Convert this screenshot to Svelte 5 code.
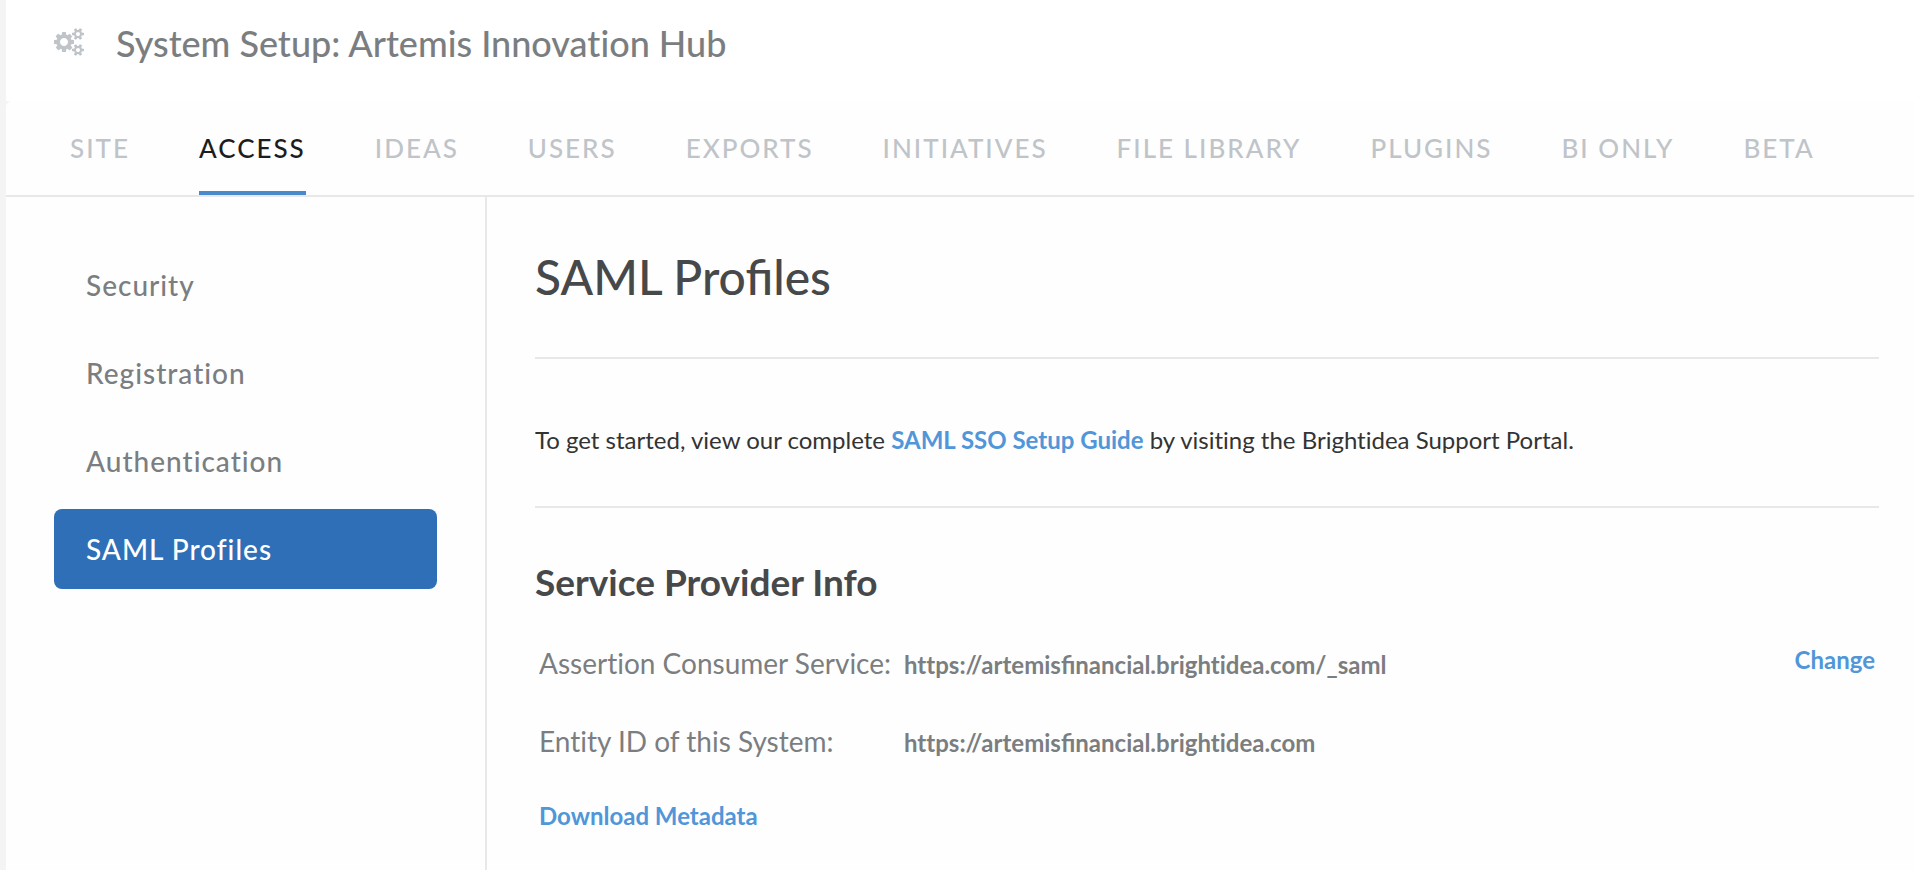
<script>
  const tabs = ['Site', 'Access', 'Ideas', 'Users', 'Exports', 'Initiatives', 'File Library', 'Plugins', 'BI Only', 'Beta'];
  const sections = ['Security', 'Registration', 'Authentication', 'SAML Profiles'];
  let activeTab = $state('Access');
  let activeSection = $state('SAML Profiles');
</script>

<div class="page">
  <header class="title-bar">
    <svg class="cogs" viewBox="0 0 1920 1792" aria-hidden="true">
      <path d="M896 896q0-106-75-181t-181-75-181 75-75 181 75 181 181 75 181-75 75-181zm768 512q0-52-38-90t-90-38-90 38-38 90q0 53 37.5 90.5t90.5 37.5 90.5-37.5 37.5-90.5zm0-1024q0-52-38-90t-90-38-90 38-38 90q0 53 37.5 90.5t90.5 37.5 90.5-37.5 37.5-90.5zm-384 421v185q0 10-7 19.5t-16 10.5l-155 24q-11 35-32 76 34 48 90 115 7 11 7 20 0 12-7 19-23 30-82.5 89.5t-78.5 59.5q-11 0-21-7l-115-90q-37 19-77 31-11 108-23 155-7 24-30 24h-186q-11 0-20-7.5t-10-17.5l-23-153q-34-10-75-31l-118 89q-7 7-20 7-11 0-21-8-144-133-144-160 0-9 7-19 10-14 41-53t47-61q-23-44-35-82l-152-24q-10-1-17-9.5t-7-19.5v-185q0-10 7-19.5t16-10.5l155-24q11-35 32-76-34-48-90-115-7-11-7-20 0-12 7-20 22-30 82-89t79-59q11 0 21 7l115 90q34-18 77-32 11-108 23-154 7-24 30-24h186q11 0 20 7.5t10 17.5l23 153q34 10 75 31l118-89q8-7 20-7 11 0 21 8 144 133 144 160 0 8-7 19-12 16-42 54t-45 60q23 48 34 82l152 23q10 2 17 10.5t7 19.5zm640 533v140q0 16-149 31-12 27-30 52 51 113 51 138 0 4-4 7-122 71-124 71-8 0-46-47t-52-68q-20 2-30 2t-30-2q-14 21-52 68t-46 47q-2 0-124-71-4-3-4-7 0-25 51-138-18-25-30-52-149-15-149-31v-140q0-16 149-31 13-29 30-52-51-113-51-138 0-4 4-7 4-2 35-20t59-34 30-16q8 0 46 46.5t52 67.5q20-2 30-2t30 2q51-71 92-112l6-2q4 0 124 70 4 3 4 7 0 25-51 138 17 23 30 52 149 15 149 31zm0-1024v140q0 16-149 31-12 27-30 52 51 113 51 138 0 4-4 7-122 71-124 71-8 0-46-47t-52-68q-20 2-30 2t-30-2q-14 21-52 68t-46 47q-2 0-124-71-4-3-4-7 0-25 51-138-18-25-30-52-149-15-149-31v-140q0-16 149-31 13-29 30-52-51-113-51-138 0-4 4-7 4-2 35-20t59-34 30-16q8 0 46 46.5t52 67.5q20-2 30-2t30 2q51-71 92-112l6-2q4 0 124 70 4 3 4 7 0 25-51 138 17 23 30 52 149 15 149 31z" />
    </svg>
    <h1>System Setup: Artemis Innovation Hub</h1>
  </header>

  <div class="panel">
    <nav class="tabs">
      {#each tabs as tab}
        <button class="tab" class:active={tab === activeTab} onclick={() => (activeTab = tab)}>{tab}</button>
      {/each}
    </nav>

    <div class="body">
      <nav class="sidebar">
        {#each sections as section}
          <button class="section" class:active={section === activeSection} onclick={() => (activeSection = section)}>{section}</button>
        {/each}
      </nav>

      <main>
        <h2>SAML Profiles</h2>
        <p class="intro">
          To get started, view our complete <a href="#guide">SAML SSO Setup Guide</a> by visiting the Brightidea Support Portal.
        </p>
        <h3>Service Provider Info</h3>
        <table>
          <tbody>
            <tr>
              <th scope="row">Assertion Consumer Service:</th>
              <td>https://artemis<span class="joined">fi</span>nancial.brightidea.com/_saml</td>
              <td class="action change"><a href="#change">Change</a></td>
            </tr>
            <tr>
              <th scope="row">Entity ID of this System:</th>
              <td>https://artemis<span class="joined">fi</span>nancial.brightidea.com</td>
              <td></td>
            </tr>
            <tr>
              <td class="action" colspan="3"><a href="#metadata">Download Metadata</a></td>
            </tr>
          </tbody>
        </table>
      </main>
    </div>
  </div>
</div>

<style>
  :global(body) {
    background: #f4f4f4;
  }
  .page {
    display: flex;
    flex-direction: column;
    box-sizing: border-box;
    min-height: 100vh;
    padding-left: 6px;
    font-family: Lato, sans-serif;
    font-variant-ligatures: none;
    color: #7b7e81;
  }
  .title-bar {
    display: flex;
    align-items: flex-start;
    gap: 32px;
    padding: 21px 48px 36px;
    background: #fff;
  }
  .cogs {
    width: 30px;
    height: 28px;
    margin-top: 7px;
    fill: #bfc4c9;
  }
  h1, h2, h3, p {
    margin: 0;
  }
  h1 {
    font-size: 36px;
    line-height: 44px;
    font-weight: 500;
  }
  .panel {
    flex: 1;
    display: flex;
    flex-direction: column;
    background: #fefefe;
    border-top-left-radius: 6px;
  }
  .tabs {
    display: flex;
    gap: 69px;
    padding: 0 64px;
    border-bottom: 2px solid #e8e8e8;
  }
  button {
    margin: 0;
    padding: 0;
    border: 0;
    background: none;
    font-family: inherit;
    color: inherit;
    cursor: pointer;
    white-space: nowrap;
  }
  .tab {
    padding: 24px 0 20px;
    border-bottom: 4px solid transparent;
    font-size: 26px;
    line-height: 46px;
    font-weight: 500;
    letter-spacing: 2px;
    text-transform: uppercase;
    color: #bfc4c9;
  }
  .tab.active {
    color: #1d1d1d;
    border-color: #4a89cc;
  }
  .body {
    flex: 1;
    display: flex;
  }
  .sidebar {
    display: flex;
    flex-direction: column;
    gap: 8px;
    flex: 0 0 383px;
    padding: 48px;
    border-right: 2px solid #e8e8e8;
  }
  .section {
    padding: 0 32px;
    border-radius: 8px;
    font-size: 28px;
    line-height: 80px;
    font-weight: 500;
    letter-spacing: 1px;
    text-align: left;
  }
  .section.active {
    background: #2f6fb7;
    color: #fff;
  }
  main {
    flex: 1;
    padding: 48px 35px 0 48px;
  }
  h2 {
    padding-bottom: 48px;
    border-bottom: 2px solid #e8e8e8;
    font-size: 48px;
    line-height: 64px;
    font-weight: 500;
    font-variant-ligatures: normal;
    color: #47484a;
  }
  .intro {
    padding: 65px 0 50px;
    border-bottom: 2px solid #e8e8e8;
    font-size: 24px;
    line-height: 32px;
    color: #333;
  }
  a {
    font-weight: 700;
    color: #5096d9;
    text-decoration: none;
  }
  h3 {
    padding: 52px 0 36px;
    font-size: 37px;
    line-height: 44px;
    font-weight: 700;
    color: #47484a;
  }
  table {
    width: 100%;
    border-collapse: collapse;
  }
  th, td {
    padding: 0 4px 30px;
    line-height: 46px;
    text-align: left;
    vertical-align: baseline;
  }
  th {
    width: 357px;
    font-size: 28px;
    font-weight: 400;
    white-space: nowrap;
  }
  td {
    font-size: 24px;
    font-weight: 700;
  }
  .joined {
    font-variant-ligatures: normal;
  }
  .action {
    line-height: 40px;
    vertical-align: top;
  }
  .change {
    text-align: right;
  }
</style>
